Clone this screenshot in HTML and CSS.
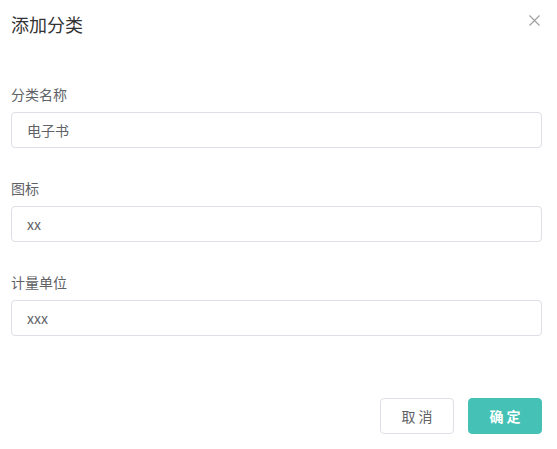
FILE: index.html
```html
<!DOCTYPE html>
<html lang="zh">
<head>
    <meta charset="UTF-8">
    <title>添加分类</title>
    <link rel="stylesheet" href="styles.css">
</head>
<body>
    <div class="dialog">
        <div class="dialog-head">
            <span class="dialog-title">添加分类</span>
            <span class="dialog-close">
                <svg width="11" height="11" viewBox="0 0 11 11"><path d="M0.5 0.5L10.5 10.5M10.5 0.5L0.5 10.5" stroke="#a0a0a0" stroke-width="1.2"/></svg>
            </span>
        </div>

        <form class="form">
            <div class="form-item">
                <label class="form-label">分类名称</label>
                <input class="form-input" type="text" value="电子书">
            </div>
            <div class="form-item">
                <label class="form-label">图标</label>
                <input class="form-input" type="text" value="xx">
            </div>
            <div class="form-item">
                <label class="form-label">计量单位</label>
                <input class="form-input" type="text" value="xxx">
            </div>
        </form>

        <div class="dialog-foot">
            <button class="btn">取 消</button>
            <button class="btn btn-primary">确 定</button>
        </div>
    </div>
</body>
</html>
```

FILE: styles.css
```css
body {
    margin: 0;
    background: #fff;
    font-family: "Noto Sans CJK SC", "Noto Sans", sans-serif;
}

.dialog {
    padding: 12px 15px 0 11px;
}

.dialog-head {
    display: flex;
    justify-content: space-between;
    align-items: flex-start;
}

.dialog-title {
    font-size: 18px;
    line-height: 24px;
    color: #333;
}

.dialog-close {
    display: flex;
    margin-top: 3px;
    margin-right: 2px;
    cursor: pointer;
}

.form {
    margin-top: 48px;
}

.form-item {
    display: flex;
    flex-direction: column;
}

.form-item + .form-item {
    margin-top: 30px;
}

.form-label {
    font-size: 14px;
    line-height: 20px;
    color: #606266;
    margin-bottom: 8px;
}

.form-input {
    height: 36px;
    box-sizing: border-box;
    border: 1px solid #dcdfe6;
    border-radius: 4px;
    padding: 0 15px;
    font-family: inherit;
    font-size: 14px;
    color: #606266;
    outline: none;
}

.dialog-foot {
    display: flex;
    justify-content: flex-end;
    gap: 14px;
    margin-top: 62px;
}

.btn {
    width: 74px;
    height: 36px;
    box-sizing: border-box;
    border: 1px solid #dcdfe6;
    border-radius: 4px;
    background: #fff;
    font-family: inherit;
    font-size: 14px;
    color: #606266;
    cursor: pointer;
}

.btn-primary {
    background: #45c2b5;
    border-color: #45c2b5;
    color: #fff;
    font-weight: bold;
}
```
